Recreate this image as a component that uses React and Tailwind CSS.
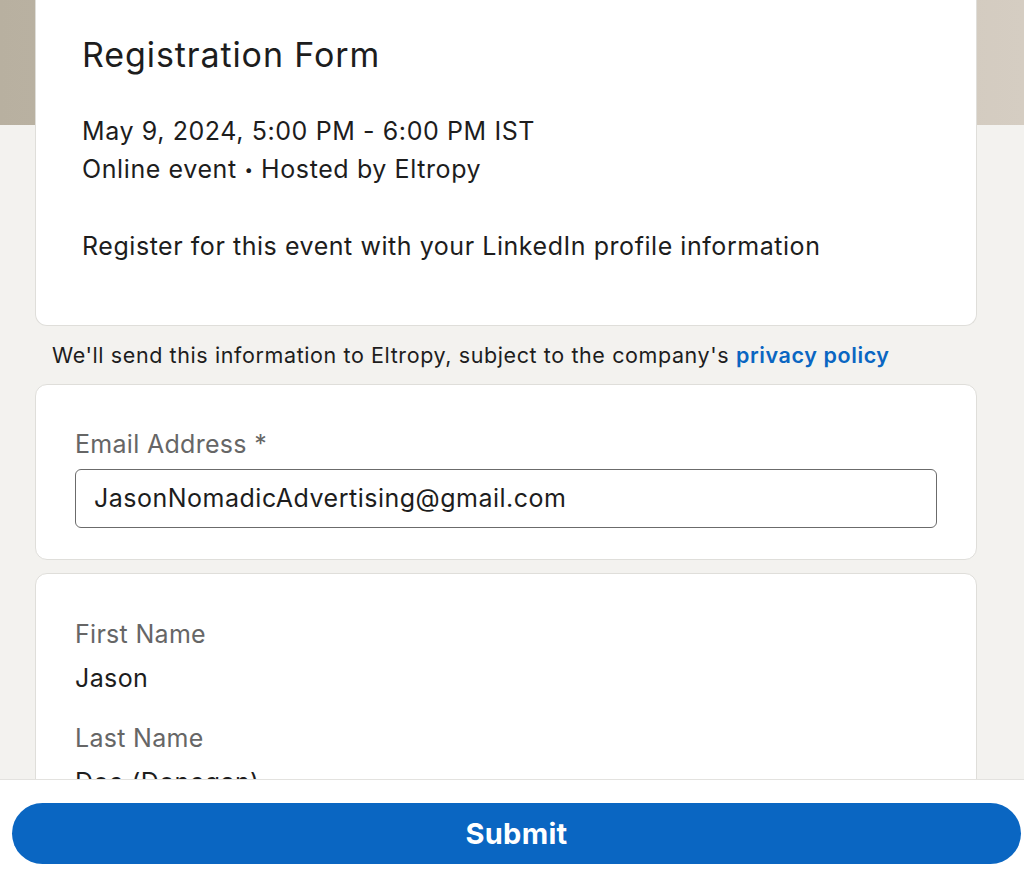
import React from 'react';

export default function App() {
  return (
    <div className="h-[880px] flex flex-col bg-[#f3f2ef] font-['Inter',sans-serif] text-[#1d1d1d] overflow-hidden">
      {/* Scrolling form area */}
      <div className="flex-1 overflow-hidden bg-[linear-gradient(to_right,#b8b0a0,#d5cdc2)] bg-no-repeat bg-[length:100%_125px]">
        {/* Event card */}
        <div className="ml-[35px] w-[942px] bg-white border-x border-b border-[#dfdeda] rounded-b-xl pt-[35px] pb-[60px] px-[46px]">
          <h1 className="text-[34px] leading-[40px] font-normal tracking-[0.9px]">Registration Form</h1>
          <div className="mt-[37px] text-[25px] leading-[38px] tracking-[0.6px]">
            <p>May 9, 2024, 5:00 PM - 6:00 PM IST</p>
            <p>
              Online event <span className="text-[15px] align-[3px]">•</span> Hosted by Eltropy
            </p>
          </div>
          <p className="mt-[38px] text-[25px] leading-[38px] tracking-[0.55px]">
            Register for this event with your LinkedIn profile information
          </p>
        </div>

        <p className="mt-[15px] ml-[52px] text-[21.5px] leading-[28px] tracking-[0.6px]">
          We'll send this information to Eltropy, subject to the company's{' '}
          <a className="text-[#0a66c2] font-semibold">privacy policy</a>
        </p>

        {/* Email card */}
        <div className="mt-[15px] ml-[35px] w-[942px] bg-white border border-[#dfdeda] rounded-xl pt-[43px] pb-[31px] px-[39px]">
          <label className="block text-[25px] leading-[32px] tracking-[0.3px] text-[#666666]">Email Address *</label>
          <div className="mt-[9px] h-[59px] border border-[#6b6b6b] rounded-md flex items-center px-[18px] text-[25px] tracking-[0.5px]">
            JasonNomadicAdvertising@gmail.com
          </div>
        </div>

        {/* Name card */}
        <div className="mt-[13px] ml-[35px] w-[942px] bg-white border border-[#dfdeda] rounded-xl pt-[44px] pb-[40px] px-[39px]">
          <p className="text-[25px] leading-[32px] tracking-[0.3px] text-[#666666]">First Name</p>
          <p className="mt-[12px] text-[25px] leading-[32px] tracking-[0.4px]">Jason</p>
          <p className="mt-[28px] text-[25px] leading-[32px] tracking-[0.3px] text-[#666666]">Last Name</p>
          <p className="mt-[12px] text-[25px] leading-[32px] tracking-[0.4px]">Doe (Donegan)</p>
        </div>
      </div>

      {/* Footer */}
      <div className="h-[101px] shrink-0 bg-white border-t border-[#e3e2df] pt-[23px]">
        <button className="ml-[12px] w-[1009px] h-[61px] rounded-full bg-[#0a66c2] text-white text-[29px] font-bold tracking-[0.3px]">
          Submit
        </button>
      </div>
    </div>
  );
}
